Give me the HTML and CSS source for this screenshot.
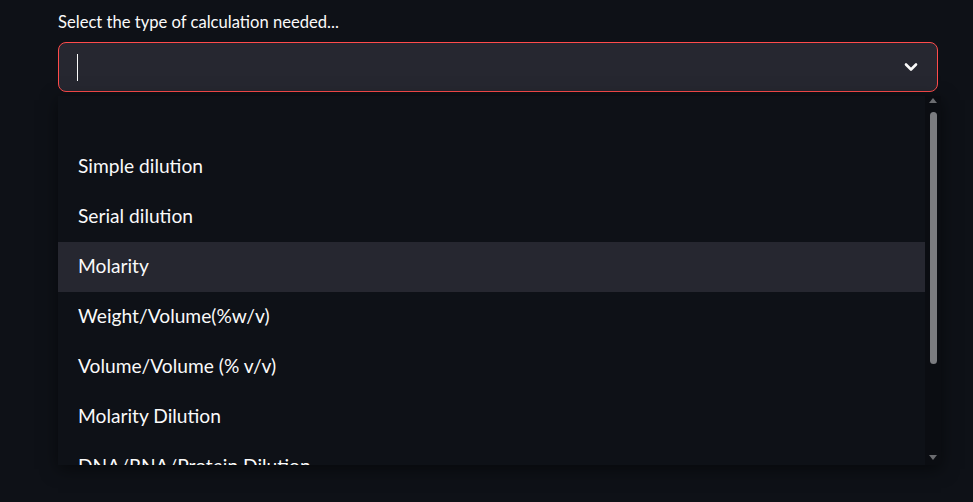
FILE: index.html
```html
<!DOCTYPE html>
<html>
<head>
<meta charset="utf-8">
<link rel="stylesheet" href="styles.css">
</head>
<body>
<div class="wrap">
  <label class="label">Select the type of calculation needed...</label>
  <div class="select">
    <span class="caret"></span>
    <svg class="chev" width="14" height="10" viewBox="0 0 14 10"><path d="M2 2.5 L7 7.5 L12 2.5" fill="none" stroke="#fafafa" stroke-width="2.6" stroke-linecap="round" stroke-linejoin="round"/></svg>
  </div>
  <div class="panel">
    <ul class="list">
      <li class="opt blank"></li>
      <li class="opt">Simple dilution</li>
      <li class="opt">Serial dilution</li>
      <li class="opt active">Molarity</li>
      <li class="opt">Weight/Volume(%w/v)</li>
      <li class="opt">Volume/Volume (% v/v)</li>
      <li class="opt">Molarity Dilution</li>
      <li class="opt">DNA/RNA/Protein Dilution</li>
    </ul>
    <div class="sb">
      <span class="arrow up"></span>
      <span class="thumb"></span>
      <span class="arrow down"></span>
    </div>
  </div>
</div>
</body>
</html>
```
FILE: styles.css
```css
html, body {
  margin: 0;
  padding: 0;
  background: #0e1117;
  height: 100%;
  overflow: hidden;
}
body {
  font-family: "Source Sans Pro", "Lato", "Noto Sans", sans-serif;
  color: #fafafa;
}
.wrap {
  padding: 11px 36px 0 58px;
  display: flex;
  flex-direction: column;
}
.label {
  font-size: 16.6px;
  line-height: 22px;
  height: 31px;
  color: #fafafa;
}
.select {
  box-sizing: border-box;
  height: 50px;
  width: 880px;
  background: #262730;
  border: 1px solid #ff4b4b;
  border-radius: 8px;
  display: flex;
  align-items: center;
  justify-content: space-between;
  padding: 0 19px 0 18px;
}
.caret {
  width: 1px;
  height: 27px;
  background: #fafafa;
}
.chev {
  display: block;
}
.panel {
  margin-top: 4px;
  width: 883px;
  height: 369px;
  background: #0e1117;
  display: flex;
  overflow: hidden;
  box-shadow: 0 4px 16px rgba(0,0,0,0.5);
}
.list {
  list-style: none;
  margin: 0;
  padding: 0;
  flex: 1;
  overflow: hidden;
}
.opt {
  box-sizing: border-box;
  height: 50px;
  line-height: 48px;
  padding: 0 0 2px 20px;
  font-size: 19.2px;
  color: #fafafa;
  white-space: nowrap;
}
.opt.blank {
  height: 46px;
}
.opt.active {
  background: #262730;
}
.sb {
  width: 16px;
  background: #0b0d12;
  display: flex;
  flex-direction: column;
  align-items: center;
  padding: 2px 0 5px;
  box-sizing: border-box;
}
.arrow {
  width: 0;
  height: 0;
  border-left: 4px solid transparent;
  border-right: 4px solid transparent;
}
.arrow.up {
  border-bottom: 5px solid #6b6c70;
  margin-bottom: 9px;
}
.arrow.down {
  border-top: 5px solid #6b6c70;
  margin-top: auto;
}
.thumb {
  width: 7px;
  height: 252px;
  border-radius: 4px;
  background: #7b7c80;
}
```
